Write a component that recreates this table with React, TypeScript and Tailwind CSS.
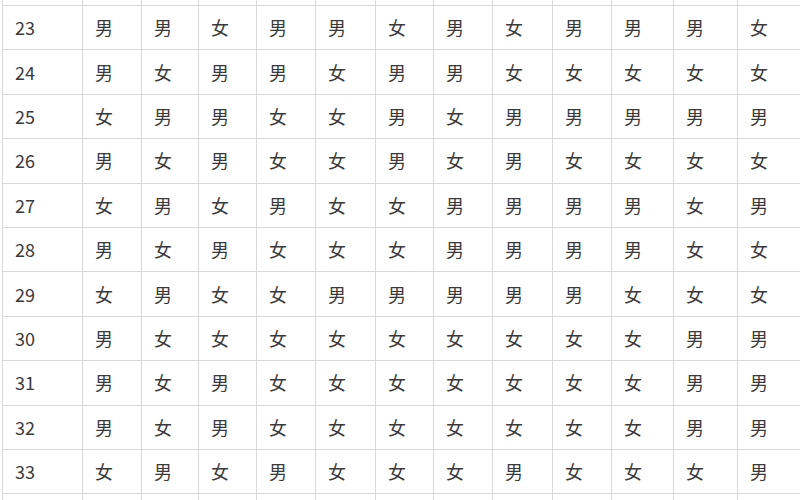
import React from "react";
import type { FC } from "react";

const rows: [number, string][] = [
  [23, "男男女男男女男女男男男女"],
  [24, "男女男男女男男女女女女女"],
  [25, "女男男女女男女男男男男男"],
  [26, "男女男女女男女男女女女女"],
  [27, "女男女男女女男男男男女男"],
  [28, "男女男女女女男男男男女女"],
  [29, "女男女女男男男男男女女女"],
  [30, "男女女女女女女女女女男男"],
  [31, "男女男女女女女女女女男男"],
  [32, "男女男女女女女女女女男男"],
  [33, "女男女男女女女男女女女男"],
];

const grid =
  "grid grid-cols-[80px_59px_57px_58px_59px_60px_58px_59px_60px_59px_62px_64px_80px]";
const cell = "border-r border-b border-[#d9d9d9] flex items-center pl-[12px]";

const EmptyRow: FC<{ h: string }> = ({ h }) => (
  <div className={grid}>
    {Array.from({ length: 13 }).map((_, i) => (
      <div key={i} className={`border-r border-b border-[#d9d9d9] ${h}`} />
    ))}
  </div>
);

const App: FC = () => {
  return (
    <div
      className="w-[800px] h-[500px] overflow-hidden bg-white pl-[2px] text-[#3a3a3a] text-[18px]"
      style={{ fontFamily: '"Noto Sans CJK SC", "Liberation Sans", sans-serif' }}
    >
      <div className="border-l border-[#d9d9d9] w-[900px]">
        <EmptyRow h="h-[6px]" />
        {rows.map(([n, s]) => (
          <div key={n} className={grid}>
            <div className={`${cell} h-[44.4px]`}>{n}</div>
            {s.split("").map((c, i) => (
              <div key={i} className={`${cell} h-[44.4px]`}>
                {c}
              </div>
            ))}
          </div>
        ))}
        <EmptyRow h="h-[44px]" />
      </div>
    </div>
  );
};

export default App;
